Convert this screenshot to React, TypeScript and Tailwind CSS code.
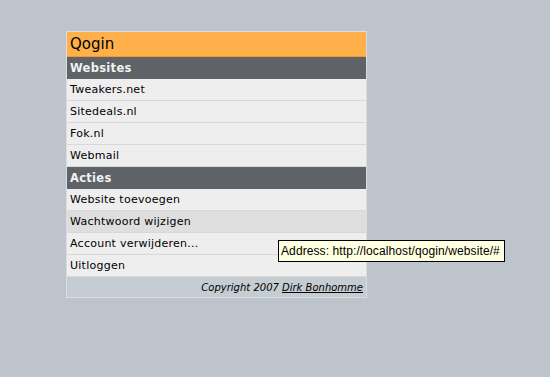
import React from "react";

const websites = ["Tweakers.net", "Sitedeals.nl", "Fok.nl", "Webmail"];
const acties = ["Website toevoegen", "Wachtwoord wijzigen", "Account verwijderen...", "Uitloggen"];

export default function App() {
  return (
    <div className="w-[550px] h-[377px] bg-[#bdc4cb] relative" style={{ fontFamily: '"DejaVu Sans", sans-serif' }}>
      <div className="pt-[31px] pl-[66px]">
        <div className="w-[301px] border border-[#d9dee3] bg-[#eeeeee]">
          <div className="h-[25px] bg-[#ffb04a] border-b border-[#f59a2a] pl-[3px] text-[15px] leading-[25px] text-black">Qogin</div>
          <div className="h-[22px] bg-[#5f6266] pl-[3px] text-[11.5px] font-bold leading-[23px] tracking-[0.3px] text-[#f2f2f2]">Websites</div>
          {websites.map((w) => (
            <div key={w} className="h-[22px] border-b border-[#d8d8d8] pl-[3px] text-[11px] leading-[22px] tracking-[0.25px] text-black">{w}</div>
          ))}
          <div className="h-[22px] bg-[#5f6266] pl-[3px] text-[11.5px] font-bold leading-[23px] tracking-[0.3px] text-[#f2f2f2]">Acties</div>
          {acties.map((a, i) => (
            <div key={a} className={"h-[22px] border-b border-[#d8d8d8] pl-[3px] text-[11px] leading-[22px] tracking-[0.25px] text-black " + (i === 1 ? "bg-[#dedede]" : "")}>{a}</div>
          ))}
          <div className="h-[20px] bg-[#c5ccd2] pr-[3px] text-right text-[10px] italic leading-[21px] text-black">
            Copyright 2007 <span className="underline">Dirk Bonhomme</span>
          </div>
        </div>
      </div>
      <div className="absolute left-[278px] top-[240px] h-[22px] w-[227px] border border-black bg-[#ffffe1] px-[2px] text-[12px] leading-[20px] tracking-[0.1px] text-black whitespace-nowrap" style={{ fontFamily: '"Liberation Sans", Arial, sans-serif' }}>
        Address: http://localhost/qogin/website/#
      </div>
    </div>
  );
}
